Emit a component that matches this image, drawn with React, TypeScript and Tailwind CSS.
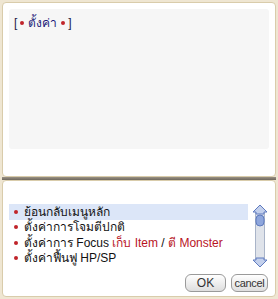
import React from "react";

const font = { fontFamily: '"Liberation Sans", Tahoma, "DejaVu Sans", sans-serif' };

function Dot({ size = 4 }: { size?: number }) {
  return (
    <span
      className="inline-block rounded-full bg-[#c0242a] align-middle"
      style={{ width: size, height: size }}
    />
  );
}

function ScrollBar() {
  return (
    <svg width="18" height="64" viewBox="0 0 18 64" className="shrink-0">
      {/* track */}
      <rect x="4.5" y="6" width="9" height="52" rx="4" fill="#dfe3ea" stroke="#a9b4c8" />
      {/* up arrow */}
      <path d="M9 1 L16 8 L13 8 L13 10 L5 10 L5 8 L2 8 Z" fill="#c3d0ec" stroke="#5f7bbf" strokeLinejoin="round" />
      {/* thumb */}
      <rect x="5" y="11" width="8" height="11" rx="4" fill="#8ea6dc" stroke="#5f7bbf" />
      {/* down arrow */}
      <path d="M9 63 L16 56 L13 56 L13 54 L5 54 L5 56 L2 56 Z" fill="#c3d0ec" stroke="#5f7bbf" strokeLinejoin="round" />
    </svg>
  );
}

const items: React.ReactNode[] = [
  "ย้อนกลับเมนูหลัก",
  "ตั้งค่าการโจมตีปกติ",
  <>
    ตั้งค่าการ Focus <span className="text-[#b8141f]">เก็บ Item</span> / <span className="text-[#b8141f]">ตี Monster</span>
  </>,
  "ตั้งค่าฟื้นฟู HP/SP",
];

export default function App() {
  return (
    <div className="w-[278px] h-[299px] bg-[#efe6d2] flex flex-col text-[12px] overflow-hidden" style={font}>
      {/* Top window */}
      <div className="h-[175px] mx-[2px] mt-[2px] bg-white border border-[#d9ccab] rounded-[4px] p-[6px]">
        <div className="h-[140px] bg-[#f6f6f6] rounded-[3px] px-[5px] pt-[6px] leading-[16px]">
          <div className="flex items-center gap-[3px]">
            <span className="text-[#1c1c48]">[</span>
            <Dot />
            <span className="text-[#1c1c7a] px-[1px]">ตั้งค่า</span>
            <Dot />
            <span className="text-[#1c1c48]">]</span>
          </div>
        </div>
      </div>

      {/* Separator */}
      <div className="h-[3px] mx-[2px] bg-gradient-to-b from-[#9a9286] to-[#6f685c]" />

      {/* Bottom window */}
      <div className="flex-1 mx-[2px] mb-[2px] bg-white border border-[#d9ccab] rounded-[4px] flex flex-col px-[6px] pt-[23px] pb-[4px]">
        <div className="flex gap-[3px]">
          <div className="flex-1 flex flex-col">
            {items.map((it, i) => (
              <div
                key={i}
                className={`h-[15.5px] flex items-center pl-[5px] whitespace-nowrap text-[#111] leading-none ${i === 0 ? "bg-[#dce6f8]" : ""}`}
              >
                <Dot />
                <span className="ml-[6px]">{it}</span>
              </div>
            ))}
          </div>
          <ScrollBar />
        </div>
        <div className="flex justify-end gap-[5px] mt-auto pr-[1px]">
          <button className="w-[41px] h-[18px] rounded-[6px] border border-[#9a9a9a] bg-gradient-to-b from-white to-[#dedede] text-[#333] text-[12px] leading-none p-0">
            OK
          </button>
          <button className="w-[37px] h-[18px] rounded-[6px] border border-[#9a9a9a] bg-gradient-to-b from-white to-[#dedede] text-[#333] text-[11px] leading-none p-0 tracking-[-0.3px]">
            cancel
          </button>
        </div>
      </div>
    </div>
  );
}
